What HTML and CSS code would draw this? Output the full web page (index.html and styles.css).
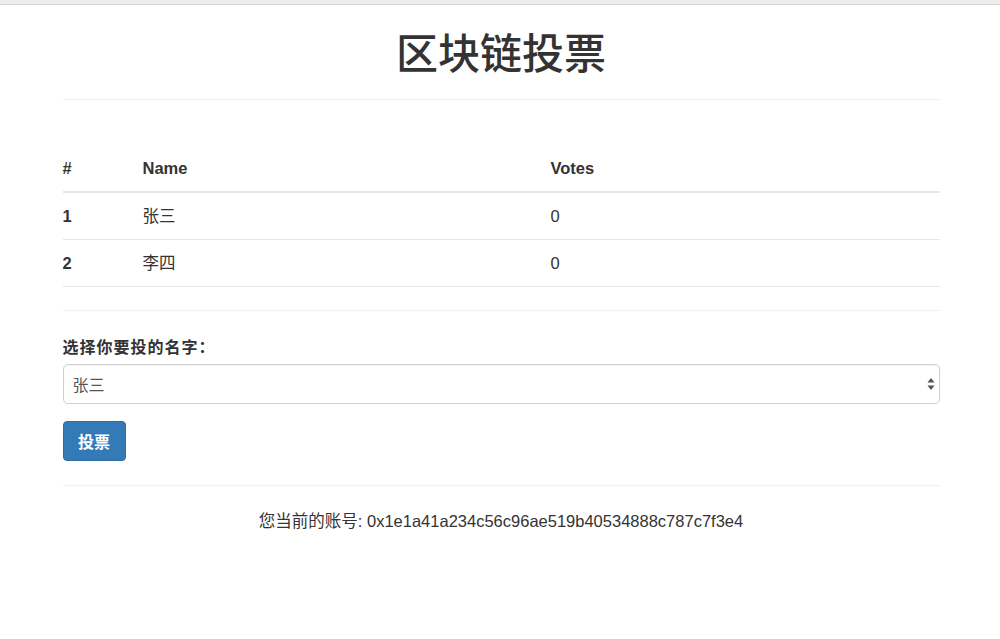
FILE: index.html
```html
<!DOCTYPE html>
<html lang="zh">
<head>
<meta charset="utf-8">
<title>区块链投票</title>
<link rel="stylesheet" href="styles.css">
</head>
<body>
<div class="topbar"></div>
<div class="container">
  <h1 class="title">区块链投票</h1>
  <hr class="rule">
  <table class="votes">
    <thead>
      <tr><th class="c-num">#</th><th class="c-name">Name</th><th>Votes</th></tr>
    </thead>
    <tbody>
      <tr><td class="idx">1</td><td>张三</td><td>0</td></tr>
      <tr><td class="idx">2</td><td>李四</td><td>0</td></tr>
    </tbody>
  </table>
  <hr class="rule rule-mid">
  <form class="vote-form">
    <label class="label" for="cand">选择你要投的名字：</label>
    <div class="select-wrap">
      <select id="cand" class="select">
        <option>张三</option>
        <option>李四</option>
      </select>
      <svg class="arrows" width="8" height="14" viewBox="0 0 8 14"><path d="M4 1 L7.5 5.5 H0.5 Z M4 13 L7.5 8.5 H0.5 Z" fill="#555"/></svg>
    </div>
    <button type="button" class="btn">投票</button>
  </form>
  <hr class="rule rule-bottom">
  <p class="account">您当前的账号: 0x1e1a41a234c56c96ae519b40534888c787c7f3e4</p>
</div>
</body>
</html>
```
FILE: styles.css
```css
html, body {
  margin: 0;
  padding: 0;
  background: #fff;
}
body {
  font-family: "Liberation Sans", Arial, "Noto Sans CJK SC", sans-serif;
  font-size: 16.5px;
  color: #333;
}
.topbar {
  height: 4px;
  background: #ececec;
  border-bottom: 1px solid #d8d8d8;
}
.container {
  width: 877px;
  margin: 0 auto;
  position: relative;
  left: 1px;
}
.title {
  margin: 18px 0 0;
  text-align: center;
  font-family: "Noto Sans CJK SC", sans-serif;
  font-weight: 500;
  font-size: 42px;
  line-height: 56px;
  color: #333;
}
.rule {
  border: 0;
  border-top: 1px solid #f1f1f3;
  margin: 20px 0 0;
  height: 0;
}
.votes {
  width: 100%;
  border-collapse: collapse;
  margin-top: 46px;
}
.votes th, .votes td {
  text-align: left;
  padding: 12px 0;
  line-height: 22px;
  vertical-align: middle;
}
.votes th {
  font-weight: 700;
  border-bottom: 2px solid #e6e6e6;
  padding-top: 11px;
}
.votes td {
  border-bottom: 1px solid #e6e6e6;
}
.votes .c-num { width: 80px; }
.votes .c-name { width: 408px; }
.votes .idx { font-weight: 700; }
.rule-mid { margin-top: 23px; }
.vote-form {
  display: flex;
  flex-direction: column;
  align-items: flex-start;
  margin-top: 25px;
}
.label {
  font-weight: 700;
  font-size: 16px;
  line-height: 20px;
  margin-bottom: 8px;
  font-family: "Noto Sans CJK SC", sans-serif;
  letter-spacing: 1px;
}
.select-wrap {
  position: relative;
  width: 100%;
}
.select {
  -webkit-appearance: none;
  appearance: none;
  width: 100%;
  height: 40px;
  border: 1px solid #cfcfcf;
  border-radius: 5px;
  background: #fff;
  padding: 0 9px;
  font-size: 16px;
  font-family: "Noto Sans CJK SC", sans-serif;
  color: #555;
  box-shadow: inset 0 1px 1px rgba(0,0,0,0.05);
}
.arrows {
  position: absolute;
  right: 5px;
  top: 13px;
}
.btn {
  margin-top: 17px;
  width: 63px;
  height: 40px;
  background: #337ab7;
  border: 1px solid #2e6da4;
  border-radius: 4px;
  color: #fff;
  font-weight: 700;
  font-size: 16px;
  font-family: "Noto Sans CJK SC", sans-serif;
  padding: 0;
}
.rule-bottom { margin-top: 24px; }
.account {
  margin: 24px 0 0;
  text-align: center;
  line-height: 22px;
  font-size: 16.5px;
}
```
